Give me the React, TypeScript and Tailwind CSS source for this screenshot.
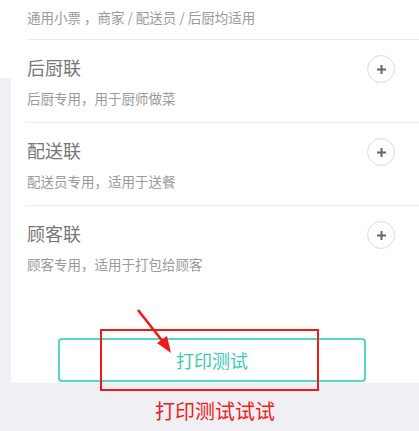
import React from "react";

const font = { fontFamily: '"Noto Sans CJK SC", "Noto Sans", sans-serif' };

function PlusButton() {
  return (
    <div className="w-[28px] h-[28px] rounded-full border border-[#dcdcdc] flex items-center justify-center shrink-0">
      <svg width="11" height="11" viewBox="0 0 11 11">
        <path d="M5.5 1v9M1 5.5h9" stroke="#666" strokeWidth="2" />
      </svg>
    </div>
  );
}

const rows = [
  { title: "后厨联", sub: "后厨专用，用于厨师做菜" },
  { title: "配送联", sub: "配送员专用，适用于送餐" },
  { title: "顾客联", sub: "顾客专用，适用于打包给顾客" },
];

export default function App() {
  return (
    <div className="relative w-[419px] h-[431px] overflow-hidden bg-[#efeff4]" style={font}>
      <div className="flex h-[383px]">
        <div className="w-[11px] shrink-0">
          <div className="h-[78px] bg-white" />
        </div>
        <div className="flex-1 bg-white flex flex-col">
          <div className="ml-[16px] h-[40px] border-b border-[#ececec] flex items-start pt-[8px]">
            <span className="text-[13.5px] leading-[18px] text-[#9a9a9a]">通用小票 ，商家 / 配送员 / 后厨均适用</span>
          </div>
          {rows.map((r, i) => (
            <div
              key={r.title}
              className={`ml-[16px] pr-[24px] flex items-start justify-between ${i < rows.length - 1 ? "border-b border-[#ececec]" : ""}`}
            >
              <div className="flex flex-col pt-[15px] pb-[15px]">
                <span className="text-[18px] leading-[24px] text-[#777]">{r.title}</span>
                <span className="mt-[10px] text-[13.5px] leading-[18px] text-[#9a9a9a]">{r.sub}</span>
              </div>
              <div className="mt-[15px]">
                <PlusButton />
              </div>
            </div>
          ))}
          <div className="mt-auto mb-[1px] ml-[47px] w-[308px] h-[44px] rounded-[4px] border-2 border-[#52d6c6] flex items-center justify-center">
            <span className="text-[18px] leading-[24px] text-[#3cc9b6]">打印测试</span>
          </div>
        </div>
      </div>
      <div className="pl-[155px] pt-[15px]">
        <span className="text-[20px] leading-[26px] text-[#f41a1a]">打印测试试试</span>
      </div>

      {/* annotation overlays */}
      <div className="absolute left-[100px] top-[329px] w-[219px] h-[62px] border-2 border-[#f01818]" />
      <svg className="absolute left-0 top-0" width="419" height="431" viewBox="0 0 419 431">
        <line x1="138" y1="310" x2="164" y2="343" stroke="#f01818" strokeWidth="2.5" />
        <polygon points="171,353 157,343 167,336" fill="#f01818" />
      </svg>
    </div>
  );
}
